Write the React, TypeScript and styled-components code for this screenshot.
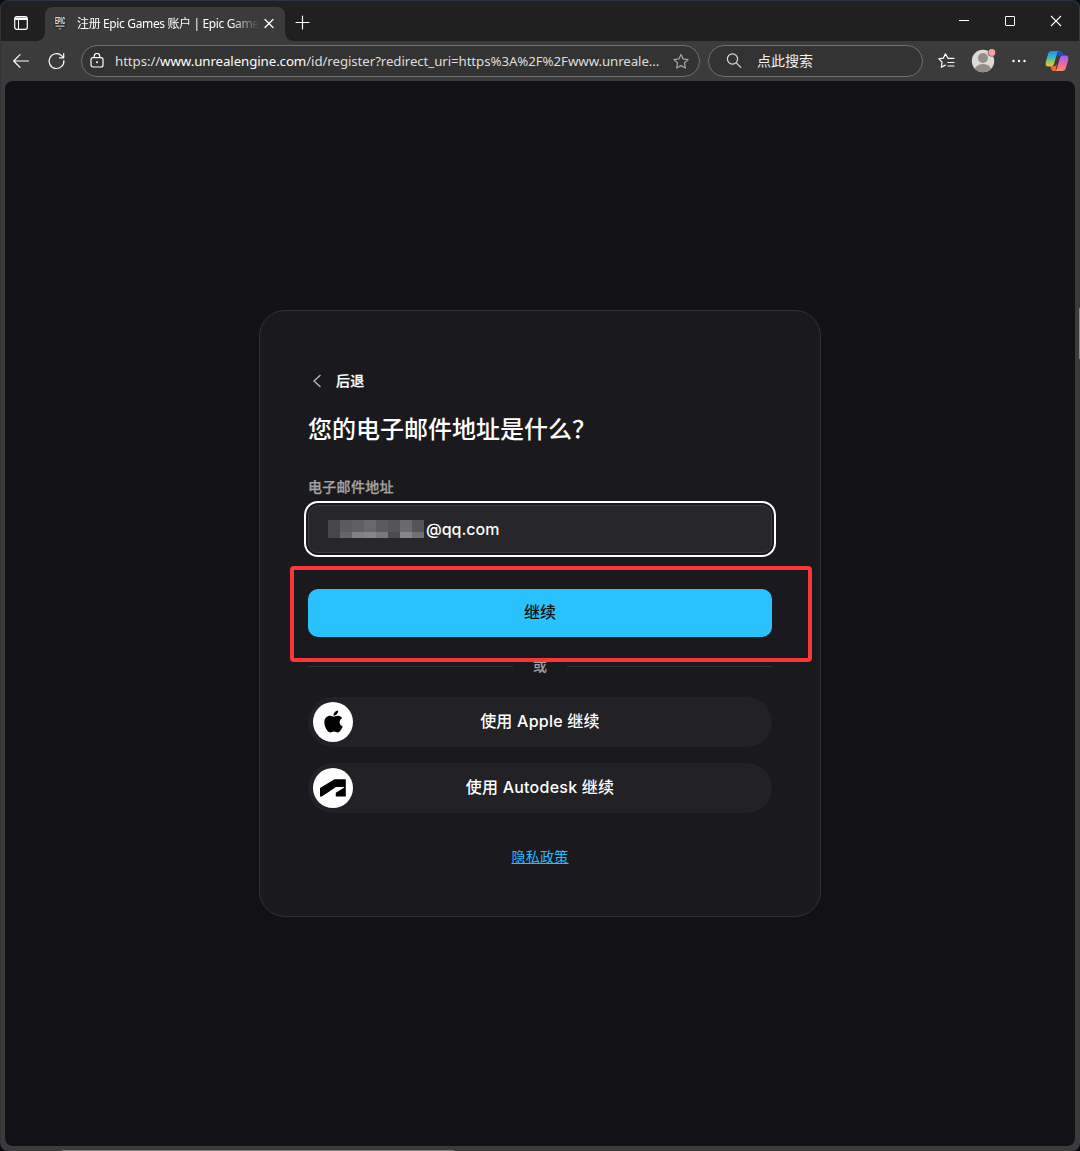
import React from 'react';
import styled, { createGlobalStyle } from 'styled-components';
import { FaApple } from 'react-icons/fa';

const Global = createGlobalStyle`
  * { box-sizing: border-box; }
  body { margin: 0; background: #070b14; }
  button, input { font: inherit; color: inherit; }
`;

const uiFont = `'Noto Sans', 'Noto Sans CJK SC', sans-serif`;
const pageFont = `Inter, 'Noto Sans CJK SC', sans-serif`;

const Window = styled.div`
  width: 1080px;
  height: 1151px;
  display: flex;
  flex-direction: column;
  background:
    linear-gradient(#7d7d7d, #7d7d7d) 62px 100% / 392px 1px no-repeat border-box,
    linear-gradient(#8a8a8a, #8a8a8a) 100% 308px / 1px 51px no-repeat border-box,
    #3b3b3b;
  border: 1px solid #333;
  border-top-color: #2c3440;
  border-right-color: transparent;
  border-bottom: 0;
  border-radius: 8px;
  overflow: hidden;
  color: #fff;
  font-family: ${uiFont};
`;

const TabBar = styled.header`
  height: 40px;
  flex: none;
  display: flex;
  align-items: flex-end;
  background: #202020;
`;

const BarButton = styled.button<{ $w: number; $h?: number }>`
  width: ${p => p.$w}px;
  height: ${p => p.$h ?? 40}px;
  flex: none;
  padding: 0;
  border: 0;
  background: transparent;
  display: flex;
  align-items: center;
  justify-content: center;
  svg { display: block; overflow: visible; }
`;

const Tab = styled.div`
  position: relative;
  width: 240px;
  height: 34px;
  padding: 0 5px 2px 8px;
  display: flex;
  align-items: center;
  background: #3b3b3b;
  border-radius: 8px 8px 0 0;
  &::before, &::after {
    content: '';
    position: absolute;
    bottom: 0;
    width: 8px;
    height: 8px;
  }
  &::before { left: -8px; background: radial-gradient(circle at 0 0, transparent 7.5px, #3b3b3b 8px); }
  &::after { right: -8px; background: radial-gradient(circle at 100% 0, transparent 7.5px, #3b3b3b 8px); }
`;

const TabTitle = styled.span`
  width: 183px;
  margin-left: 10px;
  padding-top: 1px;
  white-space: nowrap;
  font-size: 12px;
  line-height: 20px;
  letter-spacing: -0.36px;
  mask-image: linear-gradient(to right, #000 154px, transparent 182px);
`;

const Spacer = styled.div`
  flex: 1;
`;

const Toolbar = styled.nav`
  height: 40px;
  flex: none;
  display: flex;
  align-items: center;
  padding: 0 4px 0 2px;
`;

const Pill = styled.div<{ $w: number; $ml: number }>`
  width: ${p => p.$w}px;
  height: 32px;
  margin-left: ${p => p.$ml}px;
  flex: none;
  display: flex;
  align-items: center;
  background: #333;
  border: 1px solid #707070;
  border-radius: 16px;
  font-size: 14px;
  svg { display: block; flex: none; }
`;

const Url = styled.span`
  width: 547px;
  margin-left: 11px;
  white-space: nowrap;
  font-size: 13.3px;
  line-height: 20px;
  letter-spacing: -0.09px;
  color: #dedede;
  b { font-weight: 400; color: #fff; }
`;

const SearchHint = styled.span`
  margin-left: 15px;
  line-height: 20px;
  color: #f0f0f0;
`;

const Viewport = styled.main`
  flex: none;
  width: 1070px;
  height: 1065px;
  margin-left: 4px;
  border-radius: 8px;
  background: #121116;
  display: flex;
  align-items: center;
  justify-content: center;
  font-family: ${pageFont};
`;

const Card = styled.section`
  width: 562px;
  height: 607px;
  padding: 58px 48px 0;
  display: flex;
  flex-direction: column;
  background: #1a191e;
  border: 1px solid #303035;
  border-radius: 26px;
`;

const Back = styled.a`
  height: 24px;
  display: flex;
  align-items: center;
  gap: 14px;
  padding-left: 4px;
  font-size: 14px;
  font-weight: 500;
  > span { padding-bottom: 2px; letter-spacing: 0.2px; -webkit-text-stroke: 0.25px currentColor; }
`;

const Title = styled.h1`
  margin: 21px 0 0;
  font-size: 24px;
  line-height: 32px;
  font-weight: 500;
`;

const Label = styled.label`
  margin-top: 31px;
  font-size: 14px;
  line-height: 20px;
  font-weight: 500;
  letter-spacing: 0.3px;
  color: #a3a3a5;
  -webkit-text-stroke: 0.25px currentColor;
`;

const Field = styled.div`
  height: 48px;
  margin-top: 8px;
  padding-left: 19px;
  display: flex;
  align-items: center;
  background: #27262b;
  border: 1px solid #3d3c42;
  border-radius: 10px;
  outline: 2px solid #fff;
  outline-offset: 2px;
  font-size: 16px;
  font-weight: 500;
`;

const Mosaic = styled.div`
  width: 98px;
  height: 18px;
  display: grid;
  grid-template-columns: repeat(8, 12px);
  grid-template-rows: 12px 6px;
`;

const Block = styled.i<{ $c: string }>`
  background: ${p => p.$c};
`;

const Submit = styled.div`
  position: relative;
  margin-top: 36px;
`;

const SubmitButton = styled.button`
  display: block;
  width: 464px;
  height: 48px;
  padding: 0 0 4px;
  border: 0;
  border-radius: 10px;
  background: #29c2ff;
  color: #121116;
  font-size: 16px;
  font-weight: 500;
`;

const Highlight = styled.div`
  position: absolute;
  inset: -23px -40px -25px -18px;
  border: 4px solid #ff3636;
  border-radius: 4px;
`;

const Divider = styled.div`
  height: 20px;
  margin-top: 19px;
  display: flex;
  align-items: center;
  gap: 20px;
  font-size: 14px;
  line-height: 20px;
  font-weight: 500;
  color: #a3a3a5;
  &::before, &::after { content: ''; flex: 1; height: 1px; background: #303035; }
`;

const Providers = styled.div`
  margin-top: 21px;
  display: flex;
  flex-direction: column;
  gap: 16px;
`;

const Provider = styled.button`
  height: 50px;
  padding: 0 45px 0 5px;
  display: flex;
  align-items: center;
  border: 0;
  border-radius: 25px;
  background: #222126;
  font-size: 16px;
  font-weight: 500;
  letter-spacing: 0.24px;
  > span:last-child { flex: 1; padding-bottom: 5px; text-align: center; }
`;

const Disc = styled.span`
  width: 40px;
  height: 40px;
  flex: none;
  display: flex;
  align-items: center;
  justify-content: center;
  border-radius: 50%;
  background: #fff;
  color: #000;
  > svg { display: block; }
`;

const AppleMark = styled(FaApple)`
  margin: -2px 0 0 0;
`;

const Privacy = styled.a`
  align-self: center;
  margin-top: 34px;
  font-size: 14px;
  line-height: 20px;
  letter-spacing: 0.3px;
  color: #26bbff;
  text-decoration: underline;
`;

const line = { fill: 'none', stroke: '#fff', strokeWidth: 1.2, strokeLinecap: 'round', strokeLinejoin: 'round' } as const;

const star = 'M8 .9l2.15 4.55 4.95.65-3.65 3.45.95 4.95L8 12.1l-4.4 2.4.95-4.95L.9 6.1l4.95-.65z';

const blocks = [
  '#47464a', '#5b5b5d', '#616163', '#69696b', '#5b5b5d', '#555557', '#6a6a6c', '#555557',
  '#47464a', '#666668', '#828284', '#868688', '#78787a', '#4d4d4f', '#868688', '#707072',
];

const EpicIcon = () => (
  <svg width="12" height="14" viewBox="0 -.8 12 14">
    <path d="M0 0h12v10.500L6 14l-6-3.500z" fill="#2d2d2d" />
    <text x="6" y="7.400" textAnchor="middle" textLength="10" lengthAdjust="spacingAndGlyphs" fontFamily="Roboto, sans-serif" fontWeight="700" fontSize="8.500" fill="#e8e8e8">EPIC</text>
    <path d="M1.500 9.300h9" stroke="#c4c4c4" strokeWidth="1.200" />
    <path d="M3.800 11.700h4.400L6 13z" fill="#bbb" />
  </svg>
);

const Copilot = () => (
  <svg width="24" height="22" viewBox="0 0 24 22">
    <defs>
      <linearGradient id="cl" x1="0" y1="0" x2="0" y2="1">
        <stop offset="0" stopColor="#1b8ff2" /><stop offset=".4" stopColor="#2fb7d5" />
        <stop offset=".7" stopColor="#9bca4a" /><stop offset="1" stopColor="#ffc02c" />
      </linearGradient>
      <linearGradient id="cr" x1=".3" y1="0" x2=".1" y2="1">
        <stop offset="0" stopColor="#a461ef" /><stop offset=".5" stopColor="#f16a9e" />
        <stop offset="1" stopColor="#ff9350" />
      </linearGradient>
    </defs>
    <path d="M13.500 1h1.800c1.400 0 2 .8 2.400 2.200l.6 2.300h-3.500c-1.800 0-2.400 1-3 2.800z" fill="#1b4fd1" />
    <path d="M10.500 21H8.600c-1.400 0-2-.8-2.400-2.200l-.6-2.500h3c1.800 0 2.700-.8 3.300-2.700z" fill="#f26b3c" />
    <path d="M6.800 1h7.700c-1.300 0-1.900.8-2.400 2.400l-3 10.200c-.6 2-1.500 2.800-3.300 2.800H3C.5 16.400.3 14 1 11.200l2.200-7.500C3.800 1.800 4.900 1 6.800 1z" fill="url(#cl)" />
    <path d="M17.200 21H9.500c1.300 0 1.900-.8 2.400-2.400l3-10.300c.6-2 1.500-2.800 3.300-2.800H21c2.500 0 2.700 2.400 2 5.300l-2.200 7.500c-.6 1.900-1.700 2.700-3.600 2.700z" fill="url(#cr)" />
  </svg>
);

export default function App() {
  return (
    <>
      <Global />
      <Window>
        <TabBar>
          <BarButton $w={40} $h={37} aria-label="tab actions">
            <svg width="14" height="14" viewBox="0 0 14 14">
              <rect x=".7" y=".7" width="12.600" height="12.600" rx="2" {...line} />
              <path d="M1 1.500h12v2.500H1z" fill="#fff" />
              <path d="M4.500 4v9" {...line} strokeWidth={1} />
            </svg>
          </BarButton>
          <BarButton as="span" $w={4} />
          <Tab>
            <BarButton $w={14} $h={30} as="span"><EpicIcon /></BarButton>
            <TabTitle>注册 Epic Games 账户 | Epic Game</TabTitle>
            <BarButton $w={17} $h={30} aria-label="close tab">
              <svg width="8" height="8" viewBox="0 -.5 8 8"><path d="M0 0l8 8M8 0L0 8" {...line} strokeWidth={1.3} /></svg>
            </BarButton>
          </Tab>
          <BarButton $w={34} $h={37} aria-label="new tab">
            <svg width="13" height="13" viewBox="0 0 13 13"><path d="M6.500 0v13M0 6.500h13" {...line} /></svg>
          </BarButton>
          <Spacer />
          <BarButton $w={46} aria-label="minimize">
            <svg width="10" height="10" viewBox="0 0 10 10"><path d="M0 4.500h10" stroke="#fff" /></svg>
          </BarButton>
          <BarButton $w={46} aria-label="maximize">
            <svg width="10" height="10" viewBox="0 0 10 10"><rect x=".5" y=".5" width="9" height="9" rx=".5" fill="none" stroke="#fff" /></svg>
          </BarButton>
          <BarButton $w={46} aria-label="close">
            <svg width="10" height="10" viewBox="0 0 10 10"><path d="M0 0l10 10M10 0L0 10" stroke="#fff" strokeWidth="1.1" /></svg>
          </BarButton>
        </TabBar>
        <Toolbar>
          <BarButton $w={36} aria-label="back">
            <svg width="16" height="14" viewBox="0 0 16 14"><path d="M15.500 7H.8M7 .7L.7 7 7 13.300" {...line} /></svg>
          </BarButton>
          <BarButton $w={35} aria-label="reload">
            <svg width="17" height="16" viewBox="0 0 17 16"><path d="M15.900 7.500A7.400 7.400 0 1 1 13.800 2.900L15.700 4.800M15.700 .6V4.800H11.500" {...line} /></svg>
          </BarButton>
          <Pill $w={619} $ml={7}>
            <svg width="14" height="16" viewBox="0 0 14 16" style={{ marginLeft: 8 }}>
              <rect x="1" y="4.600" width="12" height="9.400" rx="2" {...line} />
              <path d="M4.200 4.500V3.200a2.800 2.800 0 0 1 5.600 0v1.300" {...line} />
              <circle cx="7" cy="9.300" r="1" fill="#fff" />
            </svg>
            <Url>https://<b>www.unrealengine.com</b>/id/register?redirect_uri=https%3A%2F%2Fwww.unreale...</Url>
            <svg width="18" height="17" viewBox="-1 -.5 18 17" style={{ marginLeft: 10 }}><path d={star} {...line} stroke="#a5a5a5" /></svg>
          </Pill>
          <Pill $w={215} $ml={8}>
            <svg width="16" height="16" viewBox="0 0 16 16" style={{ marginLeft: 17 }}>
              <circle cx="6.500" cy="6" r="5.100" {...line} stroke="#ddd" /><path d="M10.300 9.800l4.500 4.500" {...line} stroke="#ddd" />
            </svg>
            <SearchHint>点此搜索</SearchHint>
          </Pill>
          <BarButton $w={36} style={{ marginLeft: 5 }} aria-label="favorites">
            <svg width="17" height="16" viewBox="0 0 17 16">
              <path d="M10 5.300L7.400 .8 5.300 5.200.8 5.900l3.300 3.300-.8 5.100 4-2.200M10 5.300h6M10 9.500h6M10 13h6" {...line} />
            </svg>
          </BarButton>
          <BarButton $w={37} aria-label="profile">
            <svg width="24" height="24" viewBox="0 .5 24 24">
              <clipPath id="av"><circle cx="12" cy="12.500" r="11.200" /></clipPath>
              <circle cx="12" cy="12.500" r="11.200" fill="#dcd9d6" />
              <circle cx="12" cy="9.500" r="5" fill="#918e8b" />
              <ellipse cx="12" cy="21.500" rx="8.200" ry="6" fill="#918e8b" clipPath="url(#av)" />
              <circle cx="20.800" cy="4" r="4" fill="#3b3b3b" /><circle cx="20.800" cy="4" r="3.500" fill="#ff9f9f" />
            </svg>
          </BarButton>
          <BarButton $w={36} aria-label="more">
            <svg width="14" height="4" viewBox="0 0 14 4" fill="#fff"><circle cx="1.500" cy="2" r="1.200" /><circle cx="7" cy="2" r="1.200" /><circle cx="12.500" cy="2" r="1.200" /></svg>
          </BarButton>
          <BarButton $w={40} aria-label="copilot"><Copilot /></BarButton>
        </Toolbar>
        <Viewport>
          <Card>
            <Back>
              <svg width="10" height="14" viewBox="0 0 10 14"><path d="M8.500 1L2 7l6.500 6" fill="none" stroke="#b5b5b7" strokeWidth="1.400" /></svg>
              <span>后退</span>
            </Back>
            <Title>您的电子邮件地址是什么？</Title>
            <Label>电子邮件地址</Label>
            <Field>
              <Mosaic>{blocks.map((c, i) => <Block key={i} $c={c} />)}</Mosaic>
              @qq.com
            </Field>
            <Submit>
              <SubmitButton>继续</SubmitButton>
              <Highlight />
            </Submit>
            <Divider>或</Divider>
            <Providers>
              <Provider>
                <Disc><AppleMark size={25} /></Disc>
                <span>使用 Apple 继续</span>
              </Provider>
              <Provider>
                <Disc>
                  <svg width="26" height="18" viewBox="0 0 26 18"><path d="M0 17.500V9L14.500 .3H25.200Q25.800 .3 25.800 .9V17.500H15.800V13.700L24.300 8.600Q24.500 7.900 24 7.900H16L1.800 17.500z" fill="#000" /></svg>
                </Disc>
                <span>使用 Autodesk 继续</span>
              </Provider>
            </Providers>
            <Privacy>隐私政策</Privacy>
          </Card>
        </Viewport>
      </Window>
    </>
  );
}
